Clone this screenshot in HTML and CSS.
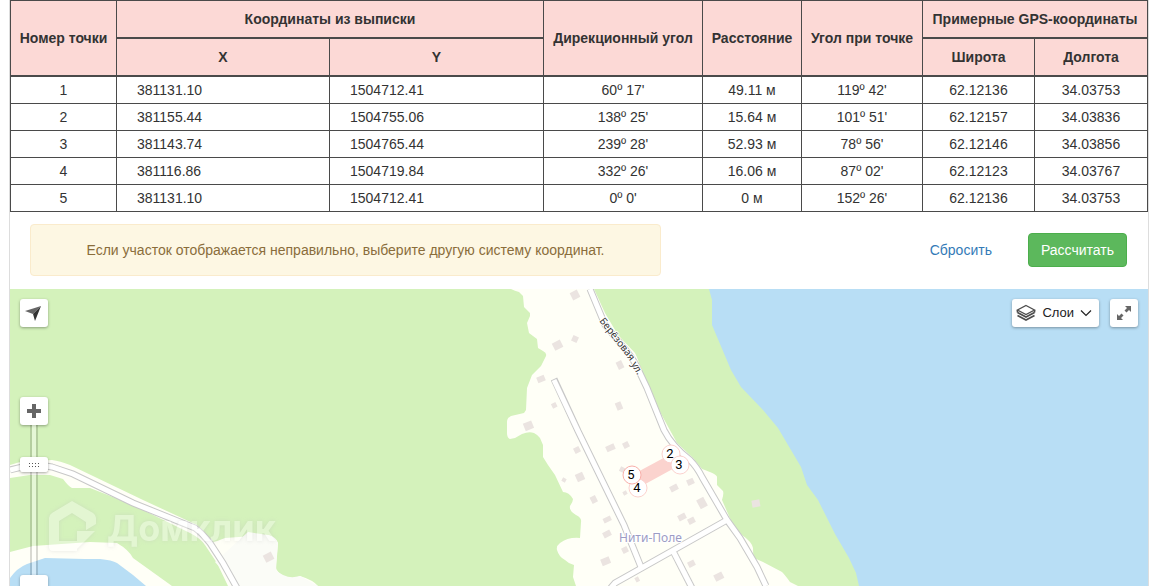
FILE: index.html
```html
<!DOCTYPE html>
<html lang="ru">
<head>
<meta charset="utf-8">
<meta name="viewport" content="width=device-width, initial-scale=1">
<title>Координаты участка</title>
<link rel="stylesheet" href="styles.css">
</head>
<body>
<main class="panel">
  <table class="points">
    <colgroup>
      <col class="col-number"><col class="col-x"><col class="col-y"><col class="col-direction"><col class="col-distance"><col class="col-angle"><col class="col-lat"><col class="col-lon">
    </colgroup>
    <thead>
      <tr>
        <th rowspan="2">Номер точки</th>
        <th colspan="2">Координаты из выписки</th>
        <th rowspan="2">Дирекционный угол</th>
        <th rowspan="2">Расстояние</th>
        <th rowspan="2">Угол при точке</th>
        <th colspan="2">Примерные GPS-координаты</th>
      </tr>
      <tr><th>X</th><th>Y</th><th>Широта</th><th>Долгота</th></tr>
    </thead>
    <tbody>
      <tr><td>1</td><td class="coord">381131.10</td><td class="coord">1504712.41</td><td>60º 17'</td><td>49.11 м</td><td>119º 42'</td><td>62.12136</td><td>34.03753</td></tr>
      <tr><td>2</td><td class="coord">381155.44</td><td class="coord">1504755.06</td><td>138º 25'</td><td>15.64 м</td><td>101º 51'</td><td>62.12157</td><td>34.03836</td></tr>
      <tr><td>3</td><td class="coord">381143.74</td><td class="coord">1504765.44</td><td>239º 28'</td><td>52.93 м</td><td>78º 56'</td><td>62.12146</td><td>34.03856</td></tr>
      <tr><td>4</td><td class="coord">381116.86</td><td class="coord">1504719.84</td><td>332º 26'</td><td>16.06 м</td><td>87º 02'</td><td>62.12123</td><td>34.03767</td></tr>
      <tr><td>5</td><td class="coord">381131.10</td><td class="coord">1504712.41</td><td>0º 0'</td><td>0 м</td><td>152º 26'</td><td>62.12136</td><td>34.03753</td></tr>
    </tbody>
  </table>

  <div class="actions">
    <p class="notice">Если участок отображается неправильно, выберите другую систему координат.</p>
    <a class="reset" href="#">Сбросить</a>
    <button class="calculate" type="button">Рассчитать</button>
  </div>

  <section class="map" aria-label="Карта участка">
    <svg class="map-canvas" viewBox="10 289 1138 297" preserveAspectRatio="xMidYMin slice">
      <rect class="land" x="10" y="289" width="1138" height="297"/>
      <!-- forest -->
      <path class="forest" d="M10 289H511Q515 291 519 292L523 296 524 307 530 313V316L527 323 529 333 537 339 538 348 543 351Q547 353 546 356L541 366 532 375 527 388 526 410 524 413 511 416Q507 418 507 422V433Q507 438 510 439L515 438 522 434Q529 431 534 433 538 435 540 438L543 445 543 457 548 465 555 475 563 492Q569 492 573 499 573 502 570 506 569 511 576 515 582 518 581 522L580 538Q568 537 560 543 556 546 557 550 559 557 565 560 569 564 574 565L573 577 576 586H318Q313 580 300 576 293 580 286 577 274 572 276 564L278 543Q276 537 268 535L225 538Q218 541 213 542L197 525 143 500 70 465Q60 461 52 460L20 462 10 465Z"/>
      <path class="forest" d="M10 478L30 475H50L63 479Q69 487 72 488L90 488 113 497 143 510 190 533Q200 538 205 545L217 563 228 586H172L133 558Q129 550 117 543L90 542 33 546 10 552Z"/>
      <path class="forest" d="M594 289H740L880 450V586H798L790 582Q785 575 782 572L763 562 754 558Q753 555 753 548 752 542 742 535L732 523 722 500Q724 494 723 491L717 485V477Q717 474 702 469L693 458 677 443 660 412 643 375Q639 361 635 353L618 335 605 313Z"/>
      <path class="water" d="M709 289H1148V586H859L856 573 849 558 835 534 818 500 807 485 801 467 778 428 763 410 741 387 731 370 712 325V300Z"/>
      <path class="water" d="M10 578Q17 568 27 564L45 558 85 559 100 559Q112 560 117 563L133 575 146 586H10Z"/>
      <path class="clearing" d="M215 562L248 532 268 535Q276 537 278 543L276 570Q286 580 300 576L318 586H237Z"/>
      <!-- houses -->
      <g class="house">
        <rect x="-4" y="-4" width="8" height="8" transform="translate(575 295) rotate(-27)"/>
        <rect x="-5" y="-4" width="9" height="8" transform="translate(558 345) rotate(-27)"/>
        <rect x="-3" y="-3" width="6" height="6" transform="translate(575 339) rotate(25)"/>
        <rect x="-3" y="-4" width="6" height="8" transform="translate(620 365) rotate(-25)"/>
        <rect x="-4" y="-3" width="8" height="6" transform="translate(541 379) rotate(-22)"/>
        <rect x="-2" y="-3" width="5" height="5" transform="translate(554 406) rotate(-27)"/>
        <rect x="-3" y="-4" width="6" height="8" transform="translate(619 406) rotate(-22)"/>
        <rect x="-4" y="-4" width="9" height="8" transform="translate(528 426) rotate(-22)"/>
        <rect x="-3" y="-3" width="6" height="6" transform="translate(577 450) rotate(-27)"/>
        <rect x="-4" y="-3" width="9" height="6" transform="translate(610 448) rotate(-24)"/>
        <rect x="-3" y="-3" width="6" height="6" transform="translate(626 445) rotate(-27)"/>
        <rect x="-4" y="-4" width="8" height="8" transform="translate(580 477) rotate(-24)"/>
        <rect x="-2" y="-2" width="4" height="4" transform="translate(564 480) rotate(27)"/>
        <rect x="-3" y="-4" width="6" height="7" transform="translate(594 500) rotate(-27)"/>
        <rect x="-2" y="-2" width="5" height="5" transform="translate(622 469) rotate(27)"/>
        <rect x="-2" y="-2" width="4" height="4" transform="translate(625 493) rotate(-27)"/>
        <rect x="-4" y="-3" width="8" height="6" transform="translate(674 488) rotate(-27)"/>
        <rect x="-3" y="-3" width="7" height="6" transform="translate(690 482) rotate(-24)"/>
        <rect x="-4" y="-5" width="8" height="10" transform="translate(702 503) rotate(-28)"/>
        <rect x="-4" y="-3" width="8" height="6" transform="translate(682 517) rotate(-27)"/>
        <rect x="-3" y="-3" width="7" height="6" transform="translate(691 521) rotate(-27)"/>
        <rect x="-4" y="-2" width="8" height="5" transform="translate(607 519) rotate(-25)"/>
        <rect x="-4" y="-3" width="8" height="6" transform="translate(607 534) rotate(-27)"/>
        <rect x="-3" y="-3" width="6" height="6" transform="translate(625 550) rotate(-27)"/>
        <rect x="-4" y="-3" width="9" height="7" transform="translate(605 561) rotate(-22)"/>
        <rect x="-2" y="-2" width="4" height="5" transform="translate(637 579) rotate(-27)"/>
        <rect x="-3" y="-3" width="7" height="6" transform="translate(691 564) rotate(-27)"/>
        <rect x="-5" y="-3" width="9" height="7" transform="translate(719 576) rotate(-27)"/>
        <rect x="-4" y="-4" width="8" height="7" transform="translate(756 504) rotate(-10)"/>
        <rect x="-5" y="-4" width="9" height="8" transform="translate(269 557) rotate(-27)"/>
      </g>
      <!-- roads: outline first, surface above it -->
      <g class="road-edge">
        <path d="M590 289L605 325 625 349Q634 360 638 369L647 388 664 430Q672 446 690 460 697 467 702 477L727 520 740 538 757 567 766 586"/>
        <path d="M554 379L578 431 624 525 641 567"/>
        <path d="M727 520L615 583 609 590"/>
        <path d="M673 551L692 588"/>
        <path d="M10 470Q35 463 52 467L73 474 133 503 195 528Q202 533 210 543L223 563 237 588"/>
      </g>
      <g class="road">
        <path d="M590 289L605 325 625 349Q634 360 638 369L647 388 664 430Q672 446 690 460 697 467 702 477L727 520 740 538 757 567 766 586"/>
        <path d="M554 380L578 431 624 525 641 567"/>
        <path d="M727 520L615 583 609 590"/>
        <path d="M673 551L692 588"/>
        <path d="M10 470Q35 463 52 467L73 474 133 503 195 528Q202 533 210 543L223 563 237 588"/>
      </g>
      <text class="street-name" transform="translate(599 321) rotate(52)">Берёзовая</text>
      <text class="street-name" transform="translate(631 364) rotate(60)">ул.</text>
      <text class="village-name" x="619" y="542">Нити-Поле</text>
      <!-- plot -->
      <path class="plot" d="M632 475L671 454 680 465 638 488Z"/>
      <g class="marker">
        <circle cx="638" cy="488" r="9"/><text x="637" y="492">4</text>
        <circle class="strong" cx="632" cy="475" r="9"/><text x="631" y="479">5</text>
        <circle cx="671" cy="454" r="9"/><text x="670" y="458">2</text>
        <circle cx="680" cy="465" r="9"/><text x="679" y="469">3</text>
      </g>
      <!-- watermark -->
      <g class="watermark">
        <path d="M72 501L93 513Q96 515 96 518V524L86 530V522L72 513 59 521V541H77V551H53Q49 551 49 547V518Q49 515 52 513ZM77 531H95L77 549Z"/>
        <text x="107" y="541">Домклик</text>
      </g>
    </svg>

    <button class="map-button locate" type="button" aria-label="Моё местоположение">
      <svg width="28" height="28" viewBox="0 0 28 28"><path fill="#666" d="M21 7L5 12 13 15Z"/><path fill="#333" d="M21 7L15 22 13 15Z"/></svg>
    </button>

    <div class="zoom">
      <button class="map-button" type="button" aria-label="Приблизить">
        <svg width="28" height="28" viewBox="0 0 28 28"><path fill="#666" d="M12 7h4v5h5v4h-5v5h-4v-5H7v-4h5z"/></svg>
      </button>
      <input class="zoom-range" type="range" min="0" max="17" value="13" aria-label="Масштаб">
      <button class="map-button" type="button" aria-label="Отдалить">
        <svg width="28" height="28" viewBox="0 0 28 28"><path fill="#666" d="M7 12h14v4H7z"/></svg>
      </button>
    </div>

    <div class="map-tools">
      <button class="map-button layers" type="button">
        <svg width="20" height="18" viewBox="0 0 20 18" fill="none" stroke="#4d4d4d"><path stroke-width="1.300" d="M10 1.500L18.500 6 10 10.500 1.500 6Z"/><path stroke-width="1.700" d="M1.500 8.500L10 13 18.500 8.500M1.500 11.500L10 16 18.500 11.500M1.500 6v2.500M18.500 6v2.500"/></svg>
        <span>Слои</span>
        <svg width="12" height="8" viewBox="0 0 12 8" fill="none" stroke="#222" stroke-width="1.200"><path d="M1 1.500L6 6.500 11 1.500"/></svg>
      </button>
      <button class="map-button" type="button" aria-label="На весь экран">
        <svg width="28" height="28" viewBox="0 0 28 28"><path fill="#666" d="M15 7h6v6l-2-2-2.500 2.500-2-2L17 9zM13 21H7v-6l2 2 2.500-2.500 2 2L11 19z"/></svg>
      </button>
    </div>
  </section>
</main>
</body>
</html>
```
FILE: styles.css
```css
* { box-sizing: border-box; }

body {
  margin: 0;
  background: #fff;
  color: #333;
  font: 14px/20px "Liberation Sans", Arial, sans-serif;
}

button, input { font: inherit; }

.panel {
  display: flex;
  flex-direction: column;
  height: 100vh;
  margin-left: 9px;
  border: solid #ddd;
  border-width: 0 1px;
}

.points {
  width: 100%;
  table-layout: fixed;
  border-collapse: collapse;
  text-align: center;
}

.col-number { width: 106px; }
.col-x { width: 213px; }
.col-y { width: 214px; }
.col-direction { width: 159px; }
.col-distance { width: 99px; }
.col-angle { width: 121px; }
.col-lat { width: 112px; }
.col-lon { width: 113px; }

.points th,
.points td {
  border: 1px solid #4a4a4a;
  white-space: nowrap;
}

.points th {
  padding: 8px 0;
  border-bottom-width: 2px;
  background: #fcd9d6;
}

.points td { padding: 3px 0; }

.points .coord {
  padding-left: 20px;
  text-align: left;
}

.actions {
  display: flex;
  align-items: center;
  padding: 12px 21px 13px 20px;
}

.notice {
  flex: 0 1 631px;
  margin: 0 auto 0 0;
  padding: 15px;
  border: 1px solid #faebcc;
  border-radius: 4px;
  background: #fdf7e3;
  color: #8a6d3b;
  text-align: center;
}

.reset {
  margin-right: 36px;
  color: #337ab7;
  text-decoration: none;
}

.calculate {
  padding: 6px 12px;
  border: 1px solid #4cae4c;
  border-radius: 4px;
  background: #5cb85c;
  color: #fff;
}

.map {
  position: relative;
  flex: 1;
  min-height: 0;
  overflow: hidden;
  background: #b8def5;
}

.map-canvas {
  display: block;
  width: 100%;
  height: 100%;
}

.land { fill: #fffff7; }
.forest { fill: #d4f2bb; }
.water { fill: #b8def5; }
.clearing { fill: #fbfcf7; }
.house { fill: #ebe4e1; }
.road-edge, .road { fill: none; }
.road-edge { stroke: #c8c8c8; stroke-width: 7px; }
.road { stroke: #fff; stroke-width: 5px; }

.street-name {
  fill: #333;
  stroke: #fff;
  stroke-width: 2px;
  paint-order: stroke;
  font: 10px "Noto Sans", sans-serif;
}

.village-name {
  fill: #9c9cc4;
  stroke: #fff;
  stroke-width: 2px;
  paint-order: stroke;
  font: 12px "Noto Sans", sans-serif;
}

.plot { fill: #fbd3ce; }
.marker circle { fill: #fff; stroke: #fcd2ce; }
.marker .strong { stroke: #f9b0aa; }
.marker text { fill: #000; font: 13px Roboto, sans-serif; text-anchor: middle; }

.watermark { fill: #fff; opacity: 0.35; filter: drop-shadow(0 0 2px #bbb); }
.watermark text { font: 700 36px Inter, sans-serif; }

.map-button {
  display: flex;
  align-items: center;
  justify-content: center;
  min-width: 28px;
  height: 28px;
  padding: 0;
  border: 0;
  border-radius: 3px;
  background: #fff;
  box-shadow: 0 1px 3px rgba(0, 0, 0, 0.35);
  color: #222;
}

.locate {
  position: absolute;
  top: 10px;
  left: 10px;
}

.zoom {
  position: absolute;
  top: 108px;
  left: 10px;
  display: flex;
  flex-direction: column;
  align-items: center;
}

.zoom-range {
  width: 28px;
  height: 150px;
  margin: 0;
  appearance: none;
  background: linear-gradient(90deg, rgba(0, 0, 0, 0.15) 2px, rgba(255, 255, 255, 0.4) 2px 6px, rgba(0, 0, 0, 0.15) 6px) center / 8px 100% no-repeat;
  direction: rtl;
  writing-mode: vertical-lr;
}

.zoom-range::-webkit-slider-thumb {
  width: 28px;
  height: 15px;
  padding: 6px 9px 5px;
  appearance: none;
  border-radius: 3px;
  background:
    linear-gradient(90deg, transparent 1px, #fff 1px) 0 0 / 3px 3px content-box,
    linear-gradient(#555 1px, #fff 1px) 0 0 / 3px 3px content-box,
    linear-gradient(#fff, #fff) border-box;
  box-shadow: 0 1px 3px rgba(0, 0, 0, 0.35);
}

.map-tools {
  position: absolute;
  top: 10px;
  right: 10px;
  display: flex;
  gap: 11px;
}

.layers {
  gap: 6px;
  padding: 0 7px 0 4px;
  font-size: 13px;
}
```
